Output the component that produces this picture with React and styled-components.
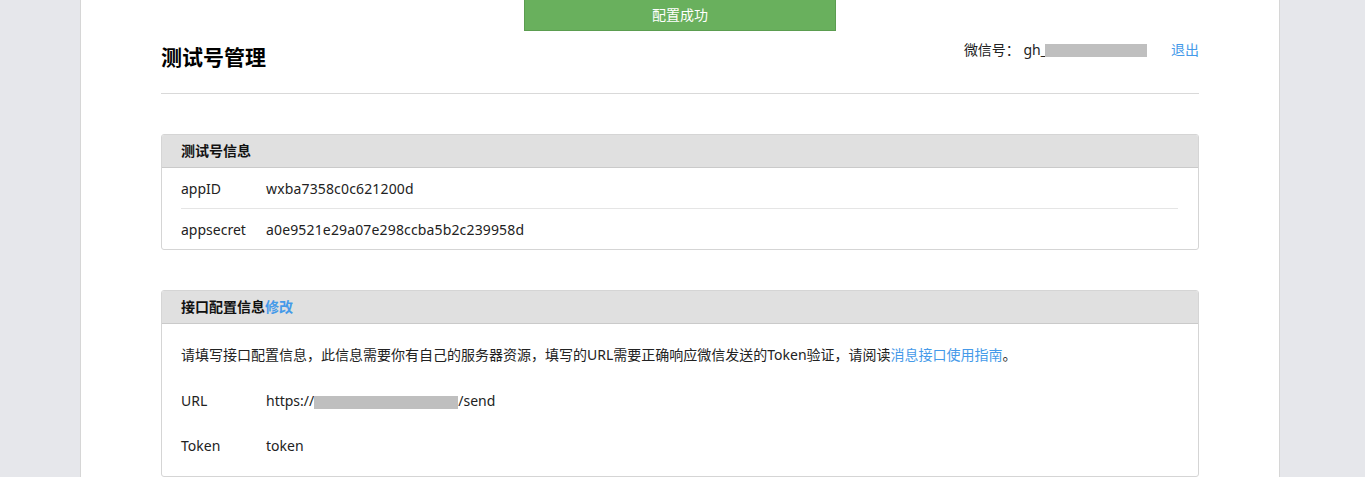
import React from 'react';
import styled, { createGlobalStyle } from 'styled-components';

const GlobalStyle = createGlobalStyle`
  html, body {
    margin: 0;
    padding: 0;
    background: #e6e7eb;
    font-family: "Noto Sans", "Noto Sans CJK SC", sans-serif;
    color: #222;
  }
`;

const Shell = styled.div`
  display: flex;
  justify-content: center;
  padding-right: 5px;
  min-height: 100vh;
`;

const Column = styled.div`
  position: relative;
  width: 1200px;
  box-sizing: border-box;
  min-height: 100vh;
  background: #fff;
  border-left: 1px solid #d6d6d6;
  border-right: 1px solid #d6d6d6;
  padding: 0 80px 40px;
`;

const Toast = styled.div`
  position: absolute;
  top: 0;
  left: 50%;
  transform: translateX(-50%);
  width: 312px;
  height: 31px;
  box-sizing: border-box;
  background: #69b05d;
  border: 1px solid #5b9d50;
  border-top: none;
  color: #fff;
  font-size: 14px;
  line-height: 29px;
  text-align: center;
`;

const Header = styled.div`
  display: flex;
  justify-content: space-between;
  align-items: flex-start;
  padding: 40px 0 19px;
  border-bottom: 1px solid #d9d9d9;
`;

const Title = styled.h2`
  margin: 0;
  font-size: 21px;
  line-height: 34px;
  font-weight: bold;
  color: #000;
`;

const Account = styled.div`
  display: flex;
  align-items: center;
  font-size: 14px;
  line-height: 20px;
  color: #222;
`;

const Masked = styled.span`
  display: inline-block;
  width: ${(p) => p.$w}px;
  height: 13px;
  background: #bfbfbf;
  vertical-align: middle;
  margin-left: ${(p) => p.$ml || 0}px;
`;

const Link = styled.a`
  color: #459ae9;
  text-decoration: none;
  cursor: pointer;
  margin-left: ${(p) => p.$ml || 0}px;
`;

const Panel = styled.div`
  margin-top: 40px;
  border: 1px solid #d5d5d5;
  border-radius: 3px;
  overflow: hidden;
`;

const PanelHead = styled.div`
  height: 32px;
  line-height: 32px;
  padding: 0 19px;
  background: #e0e0e0;
  border-bottom: 1px solid #cacaca;
  font-size: 14px;
  font-weight: bold;
  color: #111;
`;

const InfoRow = styled.div`
  display: flex;
  align-items: center;
  height: 40px;
  margin: 0 20px 0 19px;
  font-size: 14px;
  & + & {
    border-top: 1px solid #e5e5e5;
  }
`;

const Label = styled.span`
  width: 85px;
  flex-shrink: 0;
`;

const Value = styled.span`
  letter-spacing: 0.15px;
`;

const PanelBody = styled.div`
  padding: 21px 20px 8px 19px;
  font-size: 14px;
`;

const Intro = styled.p`
  margin: 0 0 13px;
  line-height: 20px;
`;

const ConfigRow = styled.div`
  display: flex;
  align-items: center;
  height: 45px;
`;

export default function App() {
  return (
    <>
      <GlobalStyle />
      <Shell>
        <Column>
          <Toast>配置成功</Toast>
          <Header>
            <Title>测试号管理</Title>
            <Account>
              微信号：&nbsp;gh_
              <Masked $w={102} $ml={-2} />
              <Link $ml={24}>退出</Link>
            </Account>
          </Header>

          <Panel>
            <PanelHead>测试号信息</PanelHead>
            <InfoRow>
              <Label>appID</Label>
              <Value>wxba7358c0c621200d</Value>
            </InfoRow>
            <InfoRow>
              <Label>appsecret</Label>
              <Value>a0e9521e29a07e298ccba5b2c239958d</Value>
            </InfoRow>
          </Panel>

          <Panel>
            <PanelHead>
              接口配置信息<Link>修改</Link>
            </PanelHead>
            <PanelBody>
              <Intro>
                请填写接口配置信息，此信息需要你有自己的服务器资源，填写的URL需要正确响应微信发送的Token验证，请阅读
                <Link>消息接口使用指南</Link>。
              </Intro>
              <ConfigRow>
                <Label>URL</Label>
                <span>
                  https://<Masked $w={144} />/send
                </span>
              </ConfigRow>
              <ConfigRow>
                <Label>Token</Label>
                <span>token</span>
              </ConfigRow>
            </PanelBody>
          </Panel>
        </Column>
      </Shell>
    </>
  );
}
